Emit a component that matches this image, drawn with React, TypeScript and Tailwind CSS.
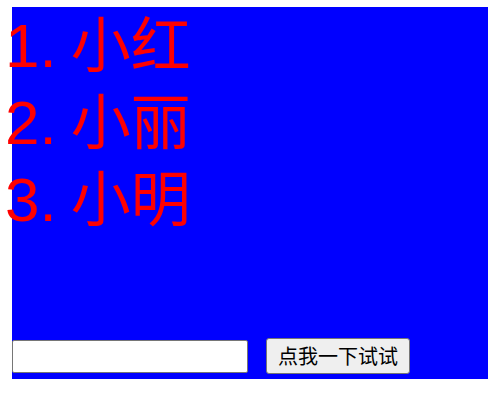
import { useState } from 'react';

const names = ['小红', '小丽', '小明'];

export default function App() {
  const [value, setValue] = useState('');

  return (
    <div className="ml-[12px] mt-[7px] flex h-[372px] w-[476px] flex-col bg-[#0000ff]">
      <div className="-ml-[7px] pt-[4px] text-[62px] leading-none text-[#ff0000]">
        {names.map((name, i) => (
          <div key={name} className="flex h-[77px] items-baseline whitespace-nowrap">
            <span style={{ fontFamily: '"Liberation Sans", sans-serif' }}>{i + 1}.</span>
            <span
              className="ml-[14px] text-[60px]"
              style={{ fontFamily: '"Noto Sans CJK SC", sans-serif' }}
            >
              {name}
            </span>
          </div>
        ))}
      </div>
      <div
        className="mt-auto flex items-center gap-[18px] pb-[5px]"
        style={{ fontFamily: '"Noto Sans CJK SC", sans-serif' }}
      >
        <input
          value={value}
          onChange={(e) => setValue(e.target.value)}
          className="h-[33px] w-[236px] rounded-[2px] border border-[#767676] bg-white px-1 text-[20px] text-black outline-none"
        />
        <button className="h-[36px] w-[144px] rounded-[3px] border border-[#767676] bg-[#efefef] text-[20px] leading-none text-black">
          点我一下试试
        </button>
      </div>
    </div>
  );
}
